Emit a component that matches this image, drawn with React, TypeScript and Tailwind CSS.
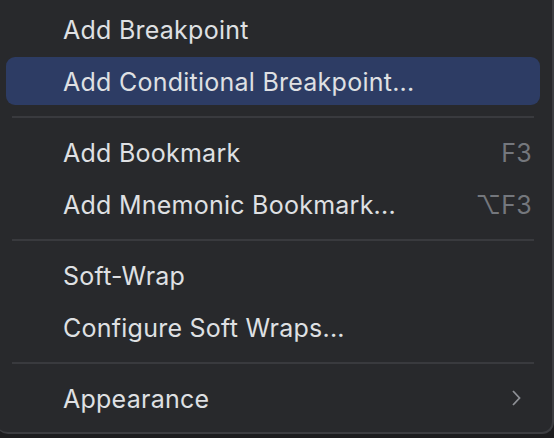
import React from "react";

type Item =
  | { kind: "item"; label: string; shortcut?: string; active?: boolean; submenu?: boolean }
  | { kind: "sep" };

const items: Item[] = [
  { kind: "item", label: "Add Breakpoint" },
  { kind: "item", label: "Add Conditional Breakpoint...", active: true },
  { kind: "sep" },
  { kind: "item", label: "Add Bookmark", shortcut: "F3" },
  { kind: "item", label: "Add Mnemonic Bookmark...", shortcut: "⌥F3" },
  { kind: "sep" },
  { kind: "item", label: "Soft-Wrap" },
  { kind: "item", label: "Configure Soft Wraps..." },
  { kind: "sep" },
  { kind: "item", label: "Appearance", submenu: true },
];

export default function App() {
  return (
    <div
      className="w-[554px] h-[438px] bg-[#1c1c1e] overflow-hidden"
      style={{ fontFamily: "Inter, 'Noto Sans', sans-serif" }}
    >
      <div className="ml-[-4px] w-[558px] h-[434px] bg-[#28292c] rounded-b-[12px] border-b-2 border-r-2 border-[#3c3d41] pt-[3px] flex flex-col">
        {items.map((it, i) =>
          it.kind === "sep" ? (
            <div key={i} className="h-[19px] flex items-center pl-[16px] pr-[18px]">
              <div className="h-[2px] w-full bg-[#393a3e]" />
            </div>
          ) : (
            <div key={i} className="h-[52px] flex items-center pl-[10px] pr-[12px]">
              <div
                className={
                  "h-[48px] w-full flex items-center pl-[57px] pr-[8px] pt-[4px] rounded-[9px] " +
                  (it.active ? "bg-[#2d3c64]" : "")
                }
              >
                <span className="flex-1 text-[25px] tracking-[0.25px] text-[#dfe0e3]">{it.label}</span>
                {it.shortcut && (
                  <span className="text-[25px] tracking-[0.25px] text-[#74777d]">{it.shortcut}</span>
                )}
                {it.submenu && (
                  <svg width="12" height="18" viewBox="0 0 12 18" className="mr-[10px] mt-[-4px]">
                    <path d="M3 2 L9.5 9 L3 16" fill="none" stroke="#8e9096" strokeWidth="1.8" />
                  </svg>
                )}
              </div>
            </div>
          )
        )}
      </div>
    </div>
  );
}
